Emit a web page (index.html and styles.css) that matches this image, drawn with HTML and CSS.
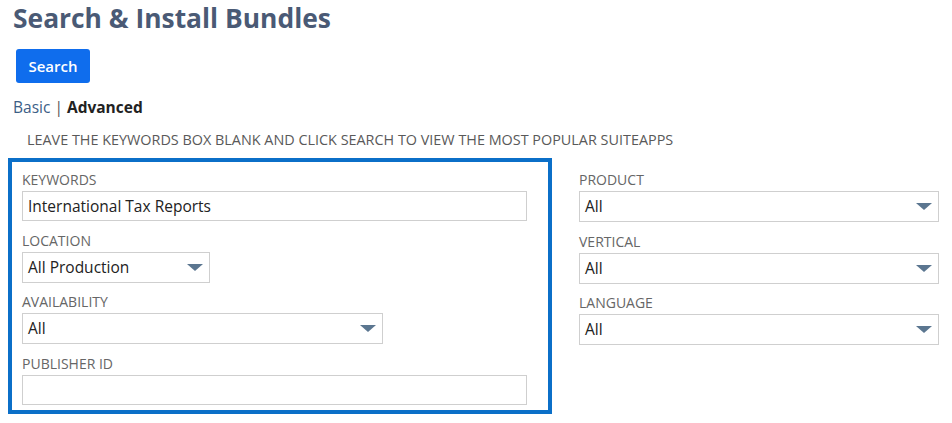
FILE: index.html
```html
<!DOCTYPE html>
<html>
<head>
<meta charset="utf-8">
<link rel="stylesheet" href="styles.css">
</head>
<body>
<div class="page">
  <h1 class="title">Search &amp; Install Bundles</h1>
  <button class="btn-search">Search</button>
  <div class="modes"><a class="mode-link">Basic</a> <span class="sep">|</span> <b class="mode-active">Advanced</b></div>
  <p class="hint">LEAVE THE KEYWORDS BOX BLANK AND CLICK SEARCH TO VIEW THE MOST POPULAR SUITEAPPS</p>
  <div class="form">
    <div class="box">
      <div class="field">
        <div class="label">KEYWORDS</div>
        <div class="control w-full">International Tax Reports</div>
      </div>
      <div class="field">
        <div class="label">LOCATION</div>
        <div class="control select w-loc">All Production<span class="arrow"></span></div>
      </div>
      <div class="field">
        <div class="label">AVAILABILITY</div>
        <div class="control select w-avail">All<span class="arrow"></span></div>
      </div>
      <div class="field">
        <div class="label">PUBLISHER ID</div>
        <div class="control w-full"></div>
      </div>
    </div>
    <div class="right">
      <div class="field">
        <div class="label">PRODUCT</div>
        <div class="control select w-right">All<span class="arrow"></span></div>
      </div>
      <div class="field">
        <div class="label">VERTICAL</div>
        <div class="control select w-right">All<span class="arrow"></span></div>
      </div>
      <div class="field">
        <div class="label">LANGUAGE</div>
        <div class="control select w-right">All<span class="arrow"></span></div>
      </div>
    </div>
  </div>
</div>
</body>
</html>
```
FILE: styles.css
```css
html, body { margin: 0; padding: 0; background: #fff; }
body { font-family: "Open Sans", "Liberation Sans", sans-serif; color: #222; }
.page { padding: 0 0 0 13px; }
.title {
  margin: 0;
  font-size: 26.4px;
  line-height: 36px;
  font-weight: 700;
  color: #4a5a75;
}
.btn-search {
  display: block;
  margin: 13px 0 0 3px;
  width: 74px;
  height: 34px;
  border: 0;
  border-radius: 3px;
  background: #0f6ded;
  color: #fff;
  font-family: inherit;
  font-size: 15px;
  font-weight: 600;
  padding: 0;
}
.modes { margin-top: 12px; font-size: 15.5px; line-height: 24px; color: #333; }
.mode-link { color: #3c5e86; }
.sep { color: #555; }
.mode-active { color: #222; font-weight: 700; }
.hint {
  margin: 11px 0 0 14px;
  font-size: 14.4px;
  line-height: 20px;
  color: #595959;
}
.form { display: flex; align-items: flex-start; margin: 8px 0 0 -5px; }
.box {
  width: 505px;
  border: 4px solid #0b6fc8;
  padding: 8px 21px 5px 10px;
}
.right { width: 360px; margin-left: 27px; padding-top: 12px; }
.field { margin-bottom: 9.5px; }
.field:last-child { margin-bottom: 0; }
.label { font-size: 14px; line-height: 20px; color: #666; margin-bottom: 1px; }
.control {
  position: relative;
  box-sizing: border-box;
  height: 30px;
  border: 1px solid #cfcfcf;
  font-size: 15.5px;
  line-height: 28px;
  padding-left: 5px;
  color: #222;
}
.select { height: 31px; line-height: 29px; }
.w-full { width: 505px; }
.w-loc { width: 188px; }
.w-avail { width: 361px; }
.w-right { width: 360px; }
.arrow {
  position: absolute;
  right: 6px;
  top: 11px;
  width: 0;
  height: 0;
  border-left: 8px solid transparent;
  border-right: 8px solid transparent;
  border-top: 7px solid #5b7690;
}
```
